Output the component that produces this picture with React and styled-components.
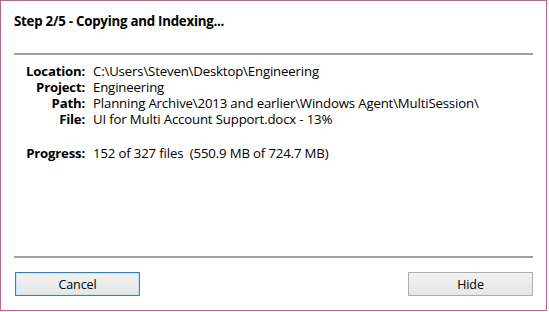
import React from "react";
import styled, { createGlobalStyle } from "styled-components";

const Global = createGlobalStyle`
  html, body { margin: 0; padding: 0; background: #ffffff; }
  body { font-family: "Open Sans", "Noto Sans", sans-serif; color: #000; }
`;

const Window = styled.div`
  box-sizing: border-box;
  width: 547px;
  height: 311px;
  border: 1px solid #c0628c;
  background: #ffffff;
  display: flex;
  flex-direction: column;
  padding: 0 13px 0 13px;
`;

const Title = styled.div`
  font-weight: 700;
  font-size: 13.3px;
  line-height: 19px;
  letter-spacing: -0.25px;
  padding-top: 11px;
  height: 52px;
  box-sizing: border-box;
`;

const Separator = styled.div`
  height: 2px;
  background: #a0a0a0;
`;

const Body = styled.div`
  flex: 1;
  padding: 8px 0 0 0;
  display: flex;
  flex-direction: column;
`;

const Grid = styled.div`
  display: grid;
  grid-template-columns: 71px auto;
  column-gap: 8px;
  font-size: 13.2px;
  line-height: 16px;
  letter-spacing: -0.15px;
`;

const Label = styled.div`
  font-weight: 700;
  text-align: right;
  white-space: nowrap;
  letter-spacing: -0.2px;
  margin-top: ${(p) => (p.$gap ? "18px" : "0")};
`;

const Value = styled.div`
  white-space: pre;
  margin-top: ${(p) => (p.$gap ? "18px" : "0")};
`;

const Footer = styled.div`
  display: flex;
  justify-content: space-between;
  padding: 14px 0 0 1px;
  height: 52px;
  box-sizing: border-box;
`;

const Button = styled.button`
  width: 125px;
  height: 24px;
  box-sizing: border-box;
  border: 1px solid ${(p) => (p.$default ? "#3c7fb1" : "#adadad")};
  box-shadow: ${(p) => (p.$default ? "inset 0 0 0 1px #c4e5f6" : "none")};
  background: linear-gradient(#f2f2f2, #e6e6e6);
  font-family: "Open Sans", "Noto Sans", sans-serif;
  font-size: 12.5px;
  letter-spacing: -0.1px;
  color: #000;
  padding: 0;
`;

const rows = [
  ["Location:", "C:\\Users\\Steven\\Desktop\\Engineering"],
  ["Project:", "Engineering"],
  ["Path:", "Planning Archive\\2013 and earlier\\Windows Agent\\MultiSession\\"],
  ["File:", "UI for Multi Account Support.docx - 13%"],
];

export default function App() {
  return (
    <>
      <Global />
      <Window>
        <Title>Step 2/5 - Copying and Indexing...</Title>
        <Separator />
        <Body>
          <Grid>
            {rows.map(([l, v]) => (
              <React.Fragment key={l}>
                <Label>{l}</Label>
                <Value>{v}</Value>
              </React.Fragment>
            ))}
            <Label $gap>Progress:</Label>
            <Value $gap>152 of 327 files  (550.9 MB of 724.7 MB)</Value>
          </Grid>
        </Body>
        <Separator />
        <Footer>
          <Button $default>Cancel</Button>
          <Button>Hide</Button>
        </Footer>
      </Window>
    </>
  );
}
